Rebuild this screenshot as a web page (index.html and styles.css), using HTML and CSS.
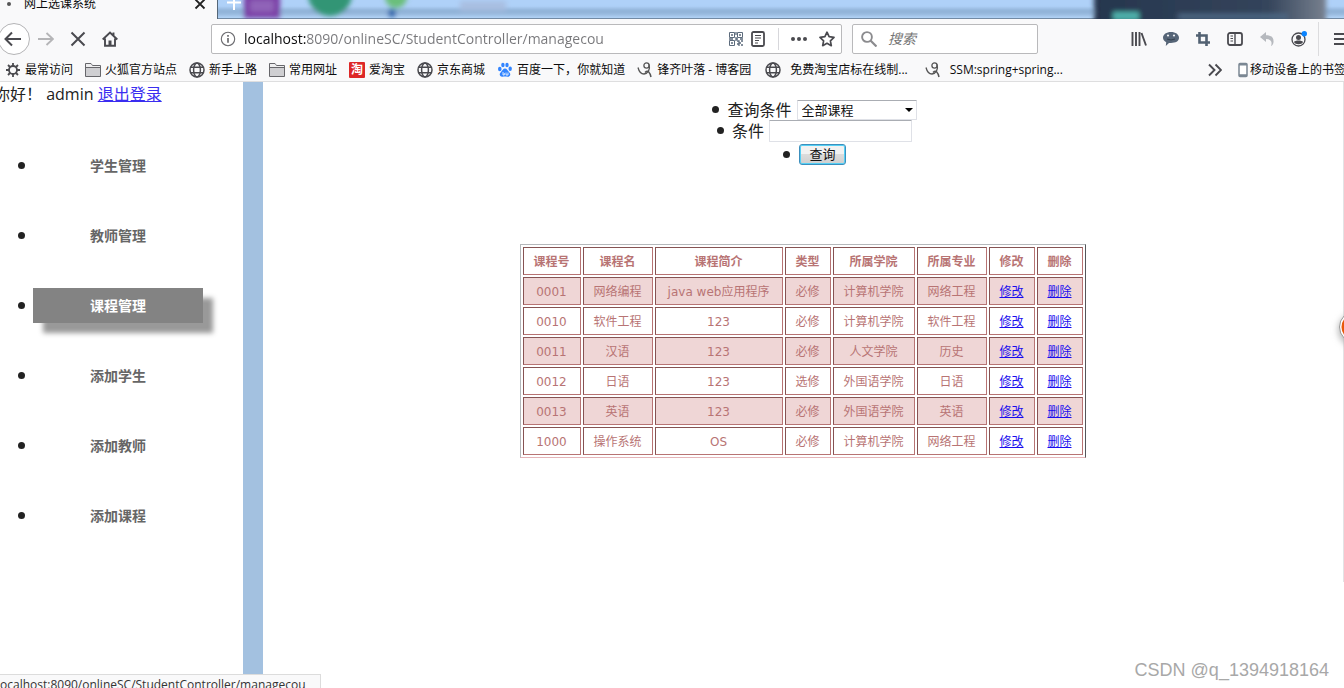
FILE: index.html
```html
<!DOCTYPE html>
<html lang="zh-CN">
<head>
<meta charset="utf-8">
<title>网上选课系统</title>
<link rel="stylesheet" href="styles.css">
</head>
<body>
<svg class="defs" aria-hidden="true">
  <symbol id="globe" viewBox="0 0 16 16"><g fill="none" stroke="#4a4a4f" stroke-width="1.5"><circle cx="8" cy="8" r="7"/><ellipse cx="8" cy="8" rx="3.4" ry="7"/><path d="M1.8 5.2h12.4M1.8 10.8h12.4" /></g></symbol>
  <symbol id="folder" viewBox="0 0 16 16"><path d="M.5 14.500V1.500h5.500l1.500 2h8v11z" fill="#cfcfd2" stroke="#67676b"/><path d="M1 5.500h14" stroke="#67676b"/><path d="M1 2h4.800l1.500 2H15v1H1z" fill="#efeff0"/></symbol>
  <symbol id="blog" viewBox="0 0 16 16"><g fill="none" stroke="#555" stroke-width="1.300"><circle cx="9.500" cy="3.500" r="2.600"/><path d="M12 2.500c1.500 5-1 9-5 9.500C4 12 2 9.500 1 5.500"/><path d="M8 10.500c3-3 5 0 6 4.500" stroke-width="1.500"/></g></symbol>
</svg>

<header class="browser">
  <div class="tabs">
    <div class="tab">
      <span class="tab-dot"></span>
      <span class="tab-title">网上选课系统</span>
      <button class="tab-close" aria-label="关闭标签页"><svg width="12" height="12" viewBox="0 0 12 12"><path d="M1.500 1.500l9 9M10.500 1.500l-9 9" stroke="#222" stroke-width="1.800"/></svg></button>
    </div>
    <div class="desktop">
      <svg width="1126" height="19" viewBox="0 0 1126 19" preserveAspectRatio="none">
        <defs>
          <filter id="soft" x="-20%" y="-50%" width="140%" height="200%"><feGaussianBlur stdDeviation="2.500"/></filter>
          <linearGradient id="dark"><stop offset="0" stop-color="#26364e"/><stop offset=".75" stop-color="#34445b"/><stop offset="1" stop-color="#78818f"/></linearGradient>
        </defs>
        <g filter="url(#soft)">
          <rect x="-10" y="10" width="1150" height="4" fill="#86a8cd"/>
          <rect x="26" y="-6" width="36" height="24" fill="#793aa4"/>
          <rect x="32" y="0" width="24" height="12" fill="#9063b8"/>
          <circle cx="112" cy="-6" r="22" fill="#309574"/>
          <circle cx="178" cy="-3" r="11" fill="#6bbf7c"/>
          <circle cx="174" cy="13" r="4" fill="#2b5fa5"/>
          <rect x="242" y="1" width="46" height="10" fill="#a9bfe2"/>
          <rect x="876" y="-8" width="232" height="34" fill="url(#dark)"/>
          <rect x="895" y="12" width="26" height="8" fill="#4fb3ad"/>
          <rect x="960" y="14" width="110" height="5" fill="#4d6784"/>
        </g>
        <path d="M9 2.500h14M16-2v12" stroke="#fff" stroke-width="2"/>
      </svg>
    </div>
  </div>

  <nav class="toolbar">
    <button class="tool back" aria-label="后退"><svg width="32" height="34" viewBox="0 0 32 34"><circle cx="16" cy="17" r="15.500" fill="#fff" stroke="#b4b4b6"/><path d="M23 17H8M14 10.500L7.500 17l6.500 6.500" fill="none" stroke="#4a4a4f" stroke-width="2"/></svg></button>
    <button class="tool" aria-label="前进"><svg width="16" height="16" viewBox="0 0 16 16"><path d="M0 8h14M8.500 2L15 8l-6.500 6" fill="none" stroke="#b5b5b7" stroke-width="1.900"/></svg></button>
    <button class="tool" aria-label="停止"><svg width="16" height="16" viewBox="0 0 16 16"><path d="M1.500 1.500l13 13M14.500 1.500l-13 13" stroke="#4a4a4f" stroke-width="2"/></svg></button>
    <button class="tool" aria-label="主页"><svg width="16" height="16" viewBox="0 0 16 16"><path d="M.7 8.500L8 1.500l7.300 7M3 7.500v7.300h10V7.500M11.500 1.500V5" fill="none" stroke="#4a4a4f" stroke-width="1.900"/><path d="M6.500 9.500h3v5h-3z" fill="#4a4a4f"/></svg></button>
    <div class="urlbar">
      <svg width="16" height="16" viewBox="0 0 16 16"><circle cx="8" cy="8" r="6.700" fill="none" stroke="#6c6c70" stroke-width="1.100"/><path d="M8 7v4.800M8 4v1.700" stroke="#6c6c70" stroke-width="1.700"/></svg>
      <input class="url" type="text" aria-label="地址" value="localhost:8090/onlineSC/StudentController/managecou">
      <button class="mini" aria-label="二维码"><svg width="14" height="14" viewBox="0 0 14 14"><g fill="none" stroke="#5c6b7c"><path d="M.5.500h5v5h-5zM8.500.500h5v5h-5zM.5 8.500h5v5h-5z"/><path d="M2 3h2M10 3h2M2 11h2M7 0v3M7 5v4M0 7h4M7 7h2M11 7h3M8 9h2v2h2M8 12h2v2M12 9h2M12 13h2" stroke-width="1.300"/></g></svg></button>
      <button class="mini" aria-label="阅读模式"><svg width="14" height="16" viewBox="0 0 14 16"><rect x="1" y="1" width="12" height="14" rx="1.500" fill="none" stroke="#4a4a4f" stroke-width="1.800"/><path d="M4 4.500h6M4 7h6M4 9.500h4M4 12h3" stroke="#4a4a4f"/></svg></button>
      <span class="bar-line"></span>
      <button class="mini" aria-label="更多"><svg width="16" height="16" viewBox="0 0 16 16" fill="#4a4a4f"><circle cx="2" cy="8" r="2"/><circle cx="8" cy="8" r="2"/><circle cx="14" cy="8" r="2"/></svg></button>
      <button class="mini" aria-label="收藏"><svg width="16" height="16" viewBox="0 0 16 16"><path d="M8 1.200l2.100 4.500 4.900.7-3.600 3.400.9 4.900L8 12.300l-4.300 2.400.9-4.900L1 6.400l4.900-.7z" fill="none" stroke="#4a4a4f" stroke-width="1.700" stroke-linejoin="round"/></svg></button>
    </div>
    <div class="searchbar">
      <svg width="16" height="16" viewBox="0 0 16 16"><circle cx="6" cy="6" r="4.900" fill="none" stroke="#8b8b8e" stroke-width="1.900"/><path d="M9.500 9.500l6 6" stroke="#8b8b8e" stroke-width="2.200"/></svg>
      <input class="search" type="text" aria-label="搜索" placeholder="搜索">
    </div>
    <div class="tools">
      <button class="tool" aria-label="书库"><svg width="16" height="16" viewBox="0 0 16 16"><path d="M1.500 1v14M5 1v14M8.500 1v14M10.500 2l4.500 12.500" stroke="#4a4a4f" stroke-width="1.900"/></svg></button>
      <button class="tool" aria-label="聊天"><svg width="16" height="16" viewBox="0 0 16 16"><path d="M8 1c4.500 0 8 2.400 8 5.800S12.500 12 8 12l-2 .1L2.800 15l.4-3.800C1.200 10 0 8.600 0 6.800 0 3.400 3.500 1 8 1z" fill="#566577"/><circle cx="5" cy="4.500" r="1.100" fill="#f0f2f4"/><circle cx="11" cy="4.500" r="1.100" fill="#f0f2f4"/><path d="M4 8q4 2 8 0" stroke="#34404d" fill="none"/></svg></button>
      <button class="tool" aria-label="截图"><svg width="16" height="16" viewBox="0 0 16 16"><path d="M1 4.500h10.500V15M4.500 1v10.500H15" fill="none" stroke="#526172" stroke-width="2.600"/></svg></button>
      <button class="tool" aria-label="侧栏"><svg width="16" height="16" viewBox="0 0 16 16"><rect x="1" y="2" width="14" height="12" rx="2" fill="none" stroke="#4a4a4f" stroke-width="1.800"/><path d="M8 2v12" stroke="#4a4a4f" stroke-width="1.400"/><path d="M3.500 5H6M3.500 7.500H6M3.500 10H6" stroke="#4a4a4f"/></svg></button>
      <button class="tool" aria-label="撤销"><svg width="16" height="16" viewBox="0 0 16 16"><path d="M1 6l6-5v3.200c5 0 8 2 7.500 7-.2 2-1 3-2.500 3.800C13.500 11 12 8 7 8v3z" fill="#b6b9be"/></svg></button>
      <button class="tool" aria-label="帐户"><svg width="16" height="16" viewBox="0 0 16 16"><circle cx="7.500" cy="8.500" r="6.500" fill="none" stroke="#4a4a4f" stroke-width="1.300"/><circle cx="7.500" cy="6.500" r="2.500" fill="#4a4a4f"/><path d="M3 11c1-2 8-2 9 0-1 3-8 3-9 0z" fill="#4a4a4f"/><circle cx="13.300" cy="2.700" r="2.700" fill="#0a84ff"/></svg></button>
    </div>
    <button class="menu" aria-label="菜单"><svg width="16" height="16" viewBox="0 0 16 16"><path d="M1 3h14M1 8h14M1 13h14" stroke="#4a4a4f" stroke-width="2"/></svg></button>
  </nav>

  <div class="bookmarks">
    <a href="#"><svg width="16" height="16" viewBox="0 0 16 16"><g fill="none" stroke="#4a4a4f" stroke-width="1.800"><circle cx="8" cy="8" r="4"/><path d="M8 1v3M8 12v3M1 8h3M12 8h3M3 3l2 2M11 11l2 2M13 3l-2 2M3 13l2-2"/></g></svg>最常访问</a>
    <a href="#"><svg width="16" height="16"><use href="#folder"/></svg>火狐官方站点</a>
    <a href="#"><svg width="16" height="16"><use href="#globe"/></svg>新手上路</a>
    <a href="#"><svg width="16" height="16"><use href="#folder"/></svg>常用网址</a>
    <a href="#"><span class="tao">淘</span>爱淘宝</a>
    <a href="#"><svg width="16" height="16"><use href="#globe"/></svg>京东商城</a>
    <a href="#"><svg width="16" height="16" viewBox="0 0 16 16" fill="#3385ff"><ellipse cx="2.800" cy="7" rx="1.800" ry="2.200"/><ellipse cx="5.900" cy="3" rx="1.700" ry="2.300"/><ellipse cx="10" cy="3" rx="1.700" ry="2.300"/><ellipse cx="13.200" cy="6.800" rx="1.700" ry="2.200"/><path d="M8 6.500c2 0 2.500 2 4 3.500 2.500 2.500 1 5-1.500 4.700-1.700-.3-3.300-.3-5 0C3 15 1.500 12.500 4 10c1.500-1.500 2-3.500 4-3.500z"/><path d="M6 10v3h1.300v-2M9 10.500V13h2v-2.500" fill="none" stroke="#fff" stroke-width=".8"/></svg><span>百度一下<span class="mark">，</span>你就知道</span></a>
    <a href="#"><svg width="16" height="16"><use href="#blog"/></svg>锋齐叶落 - 博客园</a>
    <a class="wide" href="#"><svg width="16" height="16"><use href="#globe"/></svg>免费淘宝店标在线制...</a>
    <a class="wide" href="#"><svg width="16" height="16"><use href="#blog"/></svg>SSM:spring+spring...</a>
    <button class="more" aria-label="更多书签"><svg width="14" height="14" viewBox="0 0 14 14"><path d="M1 1.500L6.500 7 1 12.500M7.500 1.500L13 7l-5.500 5.500" fill="none" stroke="#4a4a4f" stroke-width="1.900"/></svg></button>
    <a class="mobile" href="#"><svg width="10" height="16" viewBox="0 0 10 16"><rect x="1" y="1.500" width="8" height="13" rx="1" fill="#fff" stroke="#7b8793" stroke-width="1.500"/><path d="M1 2.500h8M1 13.200h8" stroke="#7b8793" stroke-width="2"/></svg>移动设备上的书签</a>
  </div>
</header>

<div class="page">
  <aside class="sidebar">
    <p class="greeting">你好<span class="mark">！</span> admin <a href="#">退出登录</a></p>
    <ul class="side-menu">
      <li><a href="#">学生管理</a></li>
      <li><a href="#">教师管理</a></li>
      <li><a class="active" href="#">课程管理</a></li>
      <li><a href="#">添加学生</a></li>
      <li><a href="#">添加教师</a></li>
      <li><a href="#">添加课程</a></li>
    </ul>
  </aside>

  <main class="content">
    <form class="query">
      <ul>
        <li><label for="kind">查询条件</label><span class="picker"><select id="kind"><option>全部课程</option></select></span></li>
        <li><label for="term">条件</label><input id="term" type="text"></li>
        <li class="submit"><button type="button">查询</button></li>
      </ul>
    </form>
    <table class="courses">
      <colgroup><col class="c-id"><col class="c-name"><col class="c-intro"><col class="c-small"><col class="c-college"><col class="c-name"><col class="c-small"><col class="c-small"></colgroup>
      <thead><tr><th>课程号</th><th>课程名</th><th>课程简介</th><th>类型</th><th>所属学院</th><th>所属专业</th><th>修改</th><th>删除</th></tr></thead>
      <tbody>
        <tr><td>0001</td><td>网络编程</td><td>java web应用程序</td><td>必修</td><td>计算机学院</td><td>网络工程</td><td><a href="#">修改</a></td><td><a href="#">删除</a></td></tr>
        <tr><td>0010</td><td>软件工程</td><td>123</td><td>必修</td><td>计算机学院</td><td>软件工程</td><td><a href="#">修改</a></td><td><a href="#">删除</a></td></tr>
        <tr><td>0011</td><td>汉语</td><td>123</td><td>必修</td><td>人文学院</td><td>历史</td><td><a href="#">修改</a></td><td><a href="#">删除</a></td></tr>
        <tr><td>0012</td><td>日语</td><td>123</td><td>选修</td><td>外国语学院</td><td>日语</td><td><a href="#">修改</a></td><td><a href="#">删除</a></td></tr>
        <tr><td>0013</td><td>英语</td><td>123</td><td>必修</td><td>外国语学院</td><td>英语</td><td><a href="#">修改</a></td><td><a href="#">删除</a></td></tr>
        <tr><td>1000</td><td>操作系统</td><td>OS</td><td>必修</td><td>计算机学院</td><td>网络工程</td><td><a href="#">修改</a></td><td><a href="#">删除</a></td></tr>
      </tbody>
    </table>
  </main>
  <span class="edge"></span>
  <svg class="float-ball" width="14" height="50" viewBox="0 0 14 50"><defs><filter id="ball-shadow" x="-50%" y="-50%" width="200%" height="200%"><feGaussianBlur stdDeviation="3"/></filter></defs><circle cx="25" cy="28" r="17" fill="#bbb" filter="url(#ball-shadow)"/><circle cx="25" cy="25" r="15.500" fill="#fff" stroke="#999"/><circle cx="25" cy="25" r="13.500" fill="#e8590c"/></svg>
</div>
<div class="status"><span>localhost:8090/onlineSC/StudentController/managecou</span></div>
<div class="watermark">CSDN @q_1394918164</div>
</body>
</html>
```

FILE: styles.css
```css
* { box-sizing: border-box; }
body {
  margin: 0;
  height: 100vh;
  display: flex;
  flex-direction: column;
  overflow: hidden;
  background: #fff;
  color: #222;
  font-family: "Open Sans", "Noto Sans CJK SC", sans-serif;
  font-size: 16px;
}
button { border: 0; padding: 0; background: none; font: inherit; }
svg { display: block; flex: none; }
.defs { position: absolute; width: 0; height: 0; }
.mark { font-family: "Noto Sans CJK TC", sans-serif; }

.browser { flex: none; background: #f9f9fa; }
.tabs { display: flex; height: 19px; overflow: hidden; }
.tab {
  flex: none;
  width: 218px;
  height: 19px;
  display: flex;
  align-items: flex-start;
  padding: 0 11px 0 7px;
  border-right: 1px solid #567;
}
.tab-dot { width: 4px; height: 4px; margin: 2px 13px 0 0; border-radius: 50%; background: #555; }
.tab-title { flex: 1; margin-top: -5px; font-size: 12px; line-height: 18px; color: #0c0c0d; }
.tab-close { margin-top: -2px; }
.desktop {
  flex: 1;
  border-bottom: 1px solid #7189a3;
  background: linear-gradient(#afd1f8 0 35%, #9fc1e6 60%, #b3d4f7);
}
.desktop svg { width: 100%; }

.toolbar { display: flex; align-items: center; height: 39px; margin-left: -2px; }
.tool { flex: none; width: 32px; height: 34px; display: flex; align-items: center; justify-content: center; }
.urlbar, .searchbar {
  display: flex;
  align-items: center;
  height: 30px;
  border: 1px solid #b9b9bb;
  border-radius: 2px;
  background: #fff;
}
.urlbar { flex: 1; min-width: 0; margin: 0 10px 0 85px; padding: 0 6px 0 8px; gap: 8px; }
.searchbar { width: 186px; padding: 0 8px; gap: 11px; }
.url, .search { min-width: 0; flex: 1; border: 0; padding: 0; outline: 0; font-family: inherit; }
.url {
  font-size: 14px;
  background: linear-gradient(90deg, #0c0c0d 62px, #77777a 62px);
  -webkit-background-clip: text;
  background-clip: text;
  color: transparent;
}
.search { background: none; font-size: 14px; }
.search::placeholder { color: #757575; font-style: italic; }
.bar-line { width: 1px; height: 22px; margin: 0 4px 0 5px; background: #d7d7db; }
.urlbar .mini:last-child { margin-left: 4px; }
.tools { display: flex; margin-left: 85px; }
.menu { flex: none; width: 26px; height: 34px; margin-left: 3px; padding-left: 14px; border-left: 1px solid #dcdcde; overflow: hidden; }

.bookmarks {
  display: flex;
  align-items: center;
  gap: 12px;
  height: 24px;
  padding-left: 5px;
  border-bottom: 1px solid #dededf;
  overflow: hidden;
  font-size: 12px;
  line-height: 18px;
  white-space: nowrap;
}
.bookmarks a { flex: none; display: flex; align-items: center; gap: 4px; color: #0c0c0d; text-decoration: none; }
.bookmarks .wide { gap: 9px; margin-left: 2px; margin-right: 3px; }
.tao { width: 16px; height: 16px; border-radius: 1px; background: #dd2727; color: #fff; font-weight: bold; line-height: 15px; text-align: center; }
.bookmarks .more { margin-left: auto; }
.bookmarks .mobile { width: 106px; gap: 2px; margin-left: 4px; }

.page { flex: 1; min-height: 0; display: flex; position: relative; }
.sidebar { flex: none; width: 263px; border-right: 20px solid #a3c1e0; }
.greeting { margin: 0 0 0 -6px; line-height: 22px; height: 22px; white-space: nowrap; }
.greeting a { color: #3a2df0; }
.side-menu { margin: 44px 0 0; padding: 0 40px 0 18px; list-style: none; display: grid; gap: 35px; }
.side-menu li { display: flex; align-items: center; gap: 8px; }
.side-menu li::before, .query li::before { content: ""; flex: none; width: 7px; height: 7px; border-radius: 50%; background: #222; }
.side-menu a {
  flex: 1;
  font-size: 14px;
  font-weight: bold;
  line-height: 35px;
  text-align: center;
  text-decoration: none;
  color: #666;
}
.side-menu .active { background: #838383; color: #fff; box-shadow: 10px 10px 5px #999; }

.content { flex: 1; display: flex; flex-direction: column; align-items: center; padding: 17px 2px 0 0; }
.query ul { margin: 0; padding: 0 0 0 24px; list-style: none; display: grid; justify-items: center; }
.query li { display: flex; align-items: center; height: 21px; }
.query .submit { height: 25px; padding-top: 2px; }
.query label { margin: 0 5px 0 8px; line-height: 20px; }
.picker { position: relative; display: block; }
.picker::after {
  content: "";
  position: absolute;
  right: 4px;
  top: 8px;
  border: 4px solid transparent;
  border-top-color: #000;
  border-bottom: 0;
  pointer-events: none;
}
.query select, .query input {
  display: block;
  height: 20px;
  border: 1px solid #dfe1e7;
  border-top-color: #aaadb3;
  border-radius: 1px;
  background: #fff;
  color: #111;
  font-family: inherit;
}
.query select { appearance: none; width: 120px; padding: 0 4px; font-size: 13px; line-height: 18px; }
.query input { width: 143px; height: 22px; padding: 0 3px; }
.query button {
  width: 47px;
  height: 21px;
  margin-left: 9px;
  border: 1px solid #3c8fbd;
  border-radius: 3px;
  box-shadow: inset 0 0 0 1px #55d0f5;
  background: linear-gradient(#f2f2f2 50%, #dcdcdc 50%, #cfcfcf);
  font-size: 13px;
  line-height: 19px;
  color: #111;
}

.courses {
  margin-top: 78px;
  border: 1px solid;
  border-color: #b5b8bb #55565a #e5b5b9 #b5b8bb;
  border-spacing: 2px;
  font-family: "DejaVu Sans", "Noto Sans CJK SC", sans-serif;
  font-size: 12px;
  line-height: 16px;
  color: #b87474;
  text-align: center;
  white-space: nowrap;
}
.courses th, .courses td { height: 28px; padding: 6px 8px 4px; border: 1px solid; border-color: #865353 #b87474 #b87474 #865353; }
.courses tbody tr:nth-child(odd) td { background: #efd6d6; }
.courses a { color: #1a0dee; }
.c-id { width: 58px; }
.c-name { width: 70px; }
.c-intro { width: 128px; }
.c-small { width: 46px; }
.c-college { width: 82px; }

.edge { position: absolute; top: 0; right: 0; width: 1px; height: 500px; background: #e3e3e5; }
.float-ball { position: absolute; top: 220px; right: 0; }
.status {
  position: absolute;
  left: 0;
  bottom: 0;
  width: 321px;
  height: 14px;
  border: 1px solid #dcdcdc;
  border-width: 1px 1px 0 0;
  background: #f9f9fa;
  color: #333;
  font-size: 12px;
  line-height: 20px;
  overflow: hidden;
}
.status span { display: block; margin-left: -3px; }
.watermark {
  position: absolute;
  right: 15px;
  bottom: 8px;
  font-family: "Liberation Sans", sans-serif;
  font-size: 18px;
  line-height: 20px;
  color: #a8a8a8;
}
```
